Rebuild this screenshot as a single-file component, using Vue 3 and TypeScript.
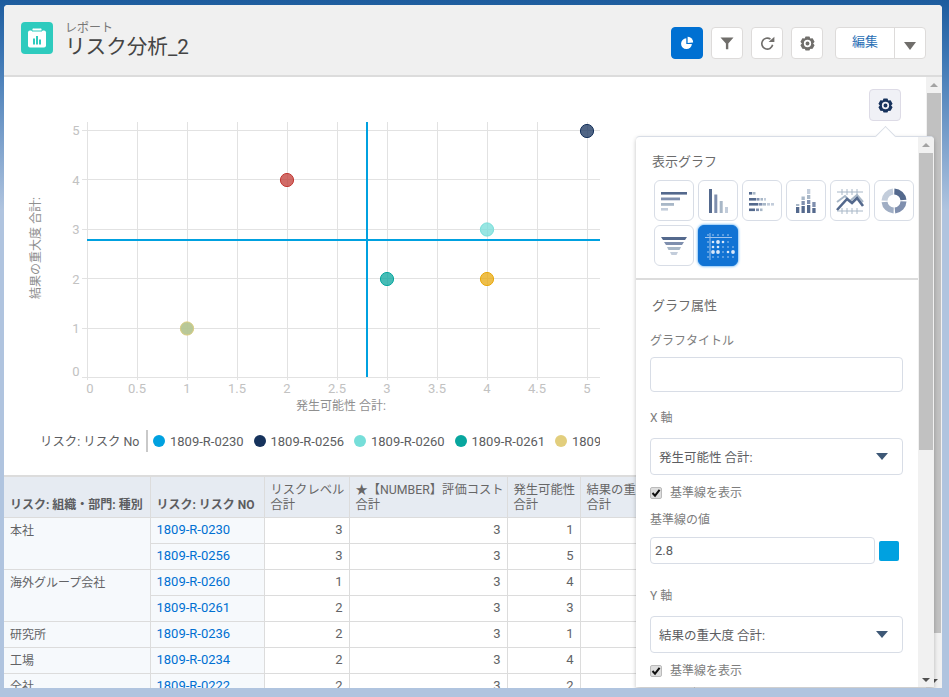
<script setup lang="ts">
type Bar = [number, number, number, number, string]

const c1 = '#54698d'
const c2 = '#7f8fae'
const c3 = '#a8b7c7'
const c4 = '#c3cddb'

function gear(cx: number, cy: number, r: number): string {
  let d = ''
  for (let i = 0; i < 6; i++) {
    const a = (Math.PI / 3) * i - Math.PI / 2
    const pts: [number, number][] = [
      [r * 0.76, a - 0.56],
      [r * 1.0, a - 0.27],
      [r * 1.0, a + 0.27],
      [r * 0.76, a + 0.56],
    ]
    for (const [rr, t] of pts) {
      d += `${d ? 'L' : 'M'}${(cx + rr * Math.cos(t)).toFixed(2)} ${(cy + rr * Math.sin(t)).toFixed(2)}`
    }
  }
  d += 'Z'
  const h = r * 0.5
  d += `M${cx - h} ${cy}a${h} ${h} 0 1 0 ${2 * h} 0a${h} ${h} 0 1 0 ${-2 * h} 0Z`
  const k = r * 0.27
  d += `M${cx - k} ${cy}a${k} ${k} 0 1 0 ${2 * k} 0a${k} ${k} 0 1 0 ${-2 * k} 0Z`
  return d
}

const gearPath = gear(8, 8, 7.8)

const icons: { id: string; bars: Bar[] }[] = [
  {
    id: 'hbar',
    bars: [
      [7, 11, 26, 2.6, c1],
      [7, 16.5, 19, 2.8, c2],
      [7, 22, 13, 2.8, c3],
      [7, 27, 7, 2.6, c4],
    ],
  },
  {
    id: 'vbar',
    bars: [
      [11, 8, 3, 24, c1],
      [16.3, 13.5, 3, 18.5, c2],
      [21.7, 20, 3, 12, c3],
      [27, 26, 3, 6, c4],
    ],
  },
  {
    id: 'ghbar',
    bars: [
      [7, 11, 3, 2.6, c1], [10.5, 11, 3, 2.6, c3],
      [7, 17, 7, 2.6, c1], [14.5, 17, 3, 2.6, c2], [18.5, 17, 2.5, 2.6, c3], [22, 17, 2, 2.6, c4],
      [7, 22, 9, 2.6, c1], [16.5, 22, 4, 2.6, c2], [21, 22, 3, 2.6, c3], [25, 22, 3, 2.6, c4], [29, 22, 3, 2.6, c4],
      [7, 27.5, 6, 2.6, c1], [14, 27.5, 3, 2.6, c2], [18, 27.5, 2.5, 2.6, c3],
    ],
  },
  {
    id: 'gvbar',
    bars: [
      [10, 26, 3.3, 6, c1], [10, 23, 3.3, 2, c3],
      [15.5, 25, 3.3, 7, c1], [15.5, 20, 3.3, 4, c2], [15.5, 15.5, 3.3, 3.5, c3],
      [21, 24, 3.3, 8, c1], [21, 19, 3.3, 4, c2], [21, 14, 3.3, 4, c3], [21, 8, 3.3, 5, c4],
      [26.3, 27, 3.3, 5, c1], [26.3, 21, 3.3, 5, c2],
    ],
  },
  { id: 'line', bars: [] },
  { id: 'donut', bars: [] },
  {
    id: 'funnel',
    bars: [],
  },
  { id: 'scatter', bars: [] },
]

const points = [
  { x: 587, y: 131, c: '#16325c' },
  { x: 287, y: 180, c: '#c23934' },
  { x: 487, y: 229.5, c: '#76ded9' },
  { x: 387, y: 279, c: '#08a69e' },
  { x: 487, y: 279, c: '#e8a80c' },
]

const gridX = [87.5, 137.5, 187.5, 237.5, 287.5, 337.5, 387.5, 437.5, 487.5, 537.5, 587.5]
const gridY = [130.5, 179.5, 229.5, 278.5, 328.5, 377.5]
const xLabels = [
  { t: '0', x: 90 }, { t: '0.5', x: 137 }, { t: '1', x: 187 }, { t: '1.5', x: 237 },
  { t: '2', x: 287 }, { t: '2.5', x: 337 }, { t: '3', x: 387 }, { t: '3.5', x: 437 },
  { t: '4', x: 487 }, { t: '4.5', x: 537 }, { t: '5', x: 587 },
]
const yLabels = [
  { t: '5', y: 130 }, { t: '4', y: 180 }, { t: '3', y: 229 },
  { t: '2', y: 279 }, { t: '1', y: 328 }, { t: '0', y: 371 },
]

const legend = [
  { c: '#00a1e0', t: '1809-R-0230' },
  { c: '#16325c', t: '1809-R-0256' },
  { c: '#76ded9', t: '1809-R-0260' },
  { c: '#08a69e', t: '1809-R-0261' },
  { c: '#e2ce7d', t: '1809-R-0262' },
]

const rows = [
  { group: '本社', span: 2, no: '1809-R-0230', v: [3, 3, 1] },
  { group: '', span: 0, no: '1809-R-0256', v: [3, 3, 5] },
  { group: '海外グループ会社', span: 2, no: '1809-R-0260', v: [1, 3, 4] },
  { group: '', span: 0, no: '1809-R-0261', v: [2, 3, 3] },
  { group: '研究所', span: 1, no: '1809-R-0236', v: [2, 3, 1] },
  { group: '工場', span: 1, no: '1809-R-0234', v: [2, 3, 4] },
  { group: '全社', span: 1, no: '1809-R-0222', v: [2, 3, 2] },
]

const dots: { x: number; y: number; r: number }[] = []
const sizes = [
  [1, 1, 1, 1, 1, 0],
  [1, 2, 3, 2, 1, 0],
  [1, 2, 2, 1, 1, 1],
  [1, 3, 3, 1, 2, 3],
  [1, 1, 1, 1, 1, 1],
]
sizes.forEach((row, j) => {
  row.forEach((s, i) => {
    if (s) dots.push({ x: 9 + i * 5, y: 11 + j * 5 + (j > 0 ? 0 : -2), r: s === 3 ? 1.9 : s === 2 ? 1.3 : 0.7 })
  })
})
</script>

<template>
  <div class="page">
    <div class="card">
      <header class="head">
        <div class="title-wrap">
          <span class="app-icon">
            <svg viewBox="0 0 32 32" width="32" height="32">
              <rect x="7" y="8.5" width="18" height="17" rx="2" fill="#fff" />
              <path d="M11 9V7.4A1.4 1.4 0 0 1 12.4 6h7.2A1.4 1.4 0 0 1 21 7.4V9z" fill="#fff" stroke="#2ecbbe" stroke-width="1" />
              <rect x="12" y="16.5" width="2" height="6" fill="#2ecbbe" />
              <rect x="15" y="14" width="2" height="8.5" fill="#2ecbbe" />
              <rect x="18" y="17.5" width="2" height="5" fill="#2ecbbe" />
            </svg>
          </span>
          <div class="titles">
            <div class="eyebrow">レポート</div>
            <h1 class="title">リスク分析_2</h1>
          </div>
        </div>
        <div class="actions">
          <button class="btn active" type="button">
            <svg viewBox="0 0 16 16" width="14" height="14">
              <path d="M7.2 2.6A6.2 6.2 0 1 0 13.6 9.2H7.2z" fill="#fff" />
              <path d="M8.7 0.9A6 6 0 0 1 15 7.5L8.7 8z" fill="#fff" />
            </svg>
          </button>
          <button class="btn" type="button">
            <svg viewBox="0 0 14 14" width="14" height="14"><path d="M0.5 1.5h13L8.3 7.4V13.2H5.9V7.4z" fill="#706e6b" /></svg>
          </button>
          <button class="btn" type="button">
            <svg viewBox="0 0 14 14" width="15" height="15">
              <path d="M11.8 8.2A5.1 5.1 0 1 1 9.8 3" fill="none" stroke="#706e6b" stroke-width="1.5" />
              <path d="M8 5.6h5.4V0.6z" fill="#706e6b" />
            </svg>
          </button>
          <button class="btn" type="button">
            <svg viewBox="0 0 16 16" width="15" height="15"><path :d="gearPath" fill="#706e6b" fill-rule="evenodd" /></svg>
          </button>
          <div class="split">
            <span class="split-main">編集</span>
            <span class="split-arrow"><i class="tri tri-gray"></i></span>
          </div>
        </div>
      </header>

      <div class="body">
        <div class="content">
          <section class="chart">
            <svg class="plot" viewBox="4 77 622 340" width="622" height="340">
              <g stroke="#e2e2e2" stroke-width="1">
                <line v-for="x in gridX" :key="'gx' + x" :x1="x" :x2="x" y1="122" y2="380" />
                <line v-for="y in gridY" :key="'gy' + y" x1="82" x2="600" :y1="y" :y2="y" />
              </g>
              <g class="ticks">
                <text v-for="l in xLabels" :key="'x' + l.t" :x="l.x" y="393" text-anchor="middle">{{ l.t }}</text>
                <text v-for="l in yLabels" :key="'y' + l.t" x="76" :y="l.y + 5" text-anchor="middle">{{ l.t }}</text>
              </g>
              <text class="axis-title" x="341" y="410" text-anchor="middle">発生可能性 合計:</text>
              <text class="axis-title" x="0" y="0" text-anchor="middle" transform="translate(40 248) rotate(-90)">結果の重大度 合計:</text>
              <line x1="367" x2="367" y1="122" y2="377" stroke="#00a1e0" stroke-width="2" />
              <line x1="87" x2="600" y1="240" y2="240" stroke="#00a1e0" stroke-width="2" />
              <g v-for="p in points" :key="p.x + '-' + p.y">
                <circle :cx="p.x" :cy="p.y" r="6.6" :fill="p.c" fill-opacity="0.75" :stroke="p.c" stroke-width="1" />
              </g>
              <circle cx="187" cy="328.5" r="6.6" fill="#00a1e0" fill-opacity="0.75" />
              <circle cx="187" cy="328.5" r="6.6" fill="#e2ce7d" fill-opacity="0.75" stroke="#e2ce7d" stroke-width="1" />
            </svg>
            <div class="legend">
              <span class="legend-title">リスク: リスク No</span>
              <span class="legend-sep"></span>
              <span v-for="l in legend" :key="l.t" class="legend-item">
                <i class="legend-dot" :style="{ background: l.c }"></i>{{ l.t }}
              </span>
            </div>
          </section>

          <table class="grid">
            <colgroup>
              <col class="w1" /><col class="w2" /><col class="w3" /><col class="w4" /><col class="w5" /><col class="w6" />
            </colgroup>
            <thead>
              <tr>
                <th class="strong">リスク: 組織・部門: 種別</th>
                <th class="strong">リスク: リスク NO</th>
                <th>リスクレベル<br />合計</th>
                <th>★【NUMBER】評価コスト<br />合計</th>
                <th>発生可能性<br />合計</th>
                <th>結果の重大度<br />合計</th>
              </tr>
            </thead>
            <tbody>
              <tr v-for="r in rows" :key="r.no">
                <td v-if="r.span" class="group" :rowspan="r.span">{{ r.group }}</td>
                <td class="no"><a class="link">{{ r.no }}</a></td>
                <td v-for="(n, i) in r.v" :key="i" class="num">{{ n }}</td>
                <td class="num"></td>
              </tr>
            </tbody>
          </table>
        </div>

        <div class="vscroll">
          <i class="sc-up"></i>
          <div class="sc-thumb outer-thumb"></div>
          <i class="sc-down"></i>
        </div>

        <button class="gear-btn" type="button">
          <svg viewBox="0 0 16 16" width="15" height="15"><path :d="gearPath" fill="#16325c" fill-rule="evenodd" /></svg>
        </button>

        <aside class="pop">
          <i class="pop-arrow"></i>
          <div class="pop-inner">
            <div class="pop-scroll">
              <div class="sec-types">
                <div class="sec-title">表示グラフ</div>
                <div class="types">
                  <button v-for="ic in icons" :key="ic.id" type="button" class="type" :class="{ on: ic.id === 'scatter' }">
                    <svg viewBox="0 0 40 40" width="40" height="40">
                      <rect v-for="(b, i) in ic.bars" :key="i" :x="b[0]" :y="b[1]" :width="b[2]" :height="b[3]" :fill="b[4]" />
                      <template v-if="ic.id === 'line'">
                        <g stroke="#a8b7c7" stroke-width="1" fill="none">
                          <path d="M7 11H33M7 30H33M12 8v6M17 8v6M22 8v6M27 8v6M12 27v6M17 27v6M22 27v6M27 27v6" />
                          <path d="M7 21L15 15L20 20L27 14L33 21" stroke-width="2" />
                        </g>
                        <path d="M7 29L17 18L22 22L27 17L33 25" stroke="#54698d" stroke-width="2.6" fill="none" />
                      </template>
                      <template v-if="ic.id === 'donut'">
                        <g fill="none" stroke-width="6">
                          <circle cx="20" cy="20" r="9.5" stroke="#54698d" stroke-dasharray="13.5 46.2" transform="rotate(-88 20 20)" />
                          <circle cx="20" cy="20" r="9.5" stroke="#7f8fae" stroke-dasharray="13.5 46.2" transform="rotate(2 20 20)" />
                          <circle cx="20" cy="20" r="9.5" stroke="#a0aec4" stroke-dasharray="13.5 46.2" transform="rotate(92 20 20)" />
                          <circle cx="20" cy="20" r="9.5" stroke="#c3cddb" stroke-dasharray="13.5 46.2" transform="rotate(182 20 20)" />
                        </g>
                      </template>
                      <template v-if="ic.id === 'funnel'">
                        <path d="M7 11H33L31 14H9z" fill="#54698d" />
                        <path d="M10 16H30L28 19H12z" fill="#7f8fae" />
                        <path d="M13 21H27L25.5 24H14.5z" fill="#a8b7c7" />
                        <path d="M16 26H24L22.5 29H17.5z" fill="#c3cddb" />
                      </template>
                      <template v-if="ic.id === 'scatter'">
                        <g stroke="#9fc4ee" stroke-width="1">
                          <line x1="7" x2="34" y1="11.5" y2="11.5" />
                          <line x1="12" x2="12" y1="7" y2="34" />
                        </g>
                        <circle v-for="(d, i) in dots" :key="i" :cx="d.x + 1" :cy="d.y" :r="d.r" fill="#dbe9fa" />
                      </template>
                    </svg>
                  </button>
                </div>
              </div>

              <div class="attrs">
                <div class="sec-title attr-head">グラフ属性</div>
                <label class="lbl">グラフタイトル</label>
                <div class="field tall"></div>

                <label class="lbl axis">X 軸</label>
                <div class="field select"><span>発生可能性 合計:</span><i class="tri tri-navy"></i></div>
                <div class="check"><i class="box"><svg viewBox="0 0 12 12" width="12" height="12"><path d="M2.5 6L5 8.7L9.6 2.8" fill="none" stroke="#111" stroke-width="2" /></svg></i>基準線を表示</div>
                <label class="lbl ref">基準線の値</label>
                <div class="ref-row">
                  <div class="field small">2.8</div>
                  <i class="swatch"></i>
                </div>

                <label class="lbl axis y">Y 軸</label>
                <div class="field select"><span>結果の重大度 合計:</span><i class="tri tri-navy"></i></div>
                <div class="check"><i class="box"><svg viewBox="0 0 12 12" width="12" height="12"><path d="M2.5 6L5 8.7L9.6 2.8" fill="none" stroke="#111" stroke-width="2" /></svg></i>基準線を表示</div>
              </div>
            </div>
            <div class="vscroll inner">
              <i class="sc-up"></i>
              <div class="sc-thumb inner-thumb"></div>
              <i class="sc-down"></i>
            </div>
          </div>
        </aside>
      </div>
    </div>
  </div>
</template>

<style scoped>
.page {
  box-sizing: border-box;
  width: 949px;
  height: 697px;
  padding: 5px 7px 9px 4px;
  overflow: hidden;
  background: linear-gradient(180deg, #1d5c9e 0, #3f78b5 60px, #b0c4df 210px, #b0c4df 100%);
  font-family: Roboto, "Noto Sans CJK JP", "Liberation Sans", sans-serif;
  color: #54555a;
}
.card {
  height: 683px;
  background: #fff;
  border-radius: 4px 4px 0 0;
  display: flex;
  flex-direction: column;
  overflow: hidden;
}
.head {
  box-sizing: border-box;
  height: 72px;
  flex: none;
  background: #f0f0f0;
  border-bottom: 2px solid #dcdcdc;
  display: flex;
  justify-content: space-between;
  align-items: flex-start;
  padding: 17px 16px 0 17px;
}
.title-wrap { display: flex; gap: 12px; }
.app-icon {
  width: 32px;
  height: 32px;
  border-radius: 4px;
  background: #2ecbbe;
  display: block;
}
.titles { margin-top: -1px; }
.eyebrow { font-size: 12px; line-height: 13px; color: #777; margin-top: 1px; }
.title { margin: 0; font-size: 20.6px; line-height: 24px; font-weight: 400; color: #444; }
.actions { display: flex; align-items: center; gap: 8px; padding-top: 5px; }
.btn {
  box-sizing: border-box;
  width: 32px;
  height: 32px;
  padding: 0;
  background: #fff;
  border: 1px solid #dddbda;
  border-radius: 4px;
  display: flex;
  align-items: center;
  justify-content: center;
}
.btn.active { background: #0070d2; border-color: #0070d2; }
.split {
  box-sizing: border-box;
  margin-left: 4px;
  width: 91px;
  height: 32px;
  display: flex;
  background: #fff;
  border: 1px solid #dddbda;
  border-radius: 4px;
}
.split-main {
  width: 58px;
  border-right: 1px solid #dddbda;
  text-align: center;
  font-size: 13px;
  line-height: 28px;
  color: #2a6fb5;
}
.split-arrow { flex: 1; display: flex; align-items: center; justify-content: center; padding-top: 5px; }
.tri { display: block; width: 0; height: 0; border-style: solid; border-color: transparent; border-bottom-width: 0; }
.tri-gray { border-width: 8px 6px 0; border-top-color: #706e6b; }
.tri-navy { border-width: 7px 6px 0; border-top-color: #3e5876; }

.body { flex: 1; min-height: 0; position: relative; display: flex; overflow: hidden; }
.content { flex: 1; min-width: 0; overflow: hidden; }
.chart { box-sizing: border-box; height: 400px; border-bottom: 2px solid #dcdcdc; }
.plot { display: block; }
.ticks text { font-size: 13px; fill: #c2c2c2; }
.axis-title { font-size: 12px; fill: #8f8f8f; }
.legend {
  box-sizing: border-box;
  width: 596px;
  margin-top: 13px;
  padding-left: 36px;
  display: flex;
  align-items: center;
  height: 22px;
  overflow: hidden;
  white-space: nowrap;
  font-size: 13px;
  color: #5c5d61;
}
.legend-title { flex: none; width: 98px; font-size: 12.4px; }
.legend-sep { flex: none; width: 2px; height: 22px; background: #c9c9c9; margin: 0 5px 0 8px; }
.legend-item { flex: none; display: inline-flex; align-items: center; width: 100.5px; }
.legend-dot { width: 12px; height: 12px; border-radius: 50%; margin-right: 5px; flex: none; }

.grid { table-layout: fixed; width: 690px; border-collapse: collapse; font-size: 13px; color: #626366; }
.w1 { width: 146px; } .w2 { width: 114px; } .w3 { width: 85px; } .w4 { width: 158px; } .w5 { width: 73px; } .w6 { width: 114px; }
.grid th {
  height: 40px;
  padding: 0 6px 4px;
  box-sizing: border-box;
  background: #e6ebf2;
  border: 1px solid #dcdcdc;
  border-top: 0;
  border-left: 0;
  text-align: left;
  vertical-align: bottom;
  font-weight: 400;
  font-size: 12.3px;
  line-height: 15px;
  white-space: nowrap;
  overflow: hidden;
  color: #666;
}
.grid th.strong { font-weight: 700; font-size: 12px; color: #5c5d61; }
.grid td {
  height: 26px;
  padding: 0 6px;
  box-sizing: border-box;
  border: 1px solid #dcdcdc;
  border-top: 0;
  border-left: 0;
  line-height: 16px;
  white-space: nowrap;
}
.grid td.group { background: #f6f9fc; vertical-align: top; padding-top: 5px; font-size: 12px; }
.grid td.no { background: #f6f9fc; }
.grid td.num { text-align: right; }
.link { color: #0070d2; }

.vscroll { flex: none; width: 16px; background: #f1f1f1; display: flex; flex-direction: column; align-items: center; position: relative; }
.sc-up { margin-top: 6px; width: 0; height: 0; border: 4px solid transparent; border-top: 0; border-bottom: 4px solid #a3a3a3; }
.sc-down { position: absolute; bottom: 5px; width: 0; height: 0; border: 4px solid transparent; border-bottom: 0; border-top: 4px solid #505050; }
.sc-thumb { background: #c1c1c1; width: 14px; margin-top: 6px; }
.outer-thumb { height: 540px; }
.inner-thumb { height: 297px; }

.gear-btn {
  position: absolute;
  top: 12px;
  left: 865px;
  box-sizing: border-box;
  width: 32px;
  height: 32px;
  padding: 0;
  background: #f0f1f6;
  border: 1px solid #dddbe6;
  border-radius: 4px;
  display: flex;
  align-items: center;
  justify-content: center;
}
.pop {
  position: absolute;
  top: 59px;
  left: 632px;
  width: 298px;
  height: 551px;
  z-index: 2;
  box-sizing: border-box;
  background: #fff;
  border-top: 1px solid #d8dde6;
  border-radius: 4px 4px 0 0;
  box-shadow: 0 2px 4px rgba(0, 0, 0, 0.25);
}
.pop-arrow {
  position: absolute;
  top: -8px;
  left: 242px;
  width: 14px;
  height: 14px;
  background: #fff;
  border-top: 1px solid #d8dde6;
  border-left: 1px solid #d8dde6;
  transform: rotate(45deg);
}
.pop-inner { position: relative; height: 100%; display: flex; overflow: hidden; border-radius: 4px 4px 0 0; }
.pop-scroll { flex: 1; min-width: 0; overflow: hidden; }
.vscroll.inner { width: 16px; }
.sec-types { box-sizing: border-box; height: 143px; border-bottom: 2px solid #dcdcdc; padding: 16px 0 0 16px; }
.sec-title { font-size: 13px; line-height: 18px; color: #6b6b6b; }
.types { display: flex; flex-wrap: wrap; gap: 4px; margin-top: 9px; margin-left: 2px; width: 270px; }
.type {
  box-sizing: border-box;
  width: 40px;
  height: 41px;
  padding: 0;
  background: #fff;
  border: 1px solid #d8dde6;
  border-radius: 6px;
  overflow: hidden;
  display: flex;
  align-items: center;
  justify-content: center;
}
.type svg { flex: none; }
.type.on { background: #1173d4; border-color: #1173d4; box-shadow: 0 0 3px #1589ee; }
.attrs { padding: 17px 15px 0 14px; }
.attr-head { padding-left: 2px; }
.lbl { display: block; font-size: 12px; line-height: 16px; color: #7d7d7d; margin-top: 18px; }
.field {
  box-sizing: border-box;
  background: #fff;
  border: 1px solid #d8dde6;
  border-radius: 4px;
  font-size: 12.5px;
  color: #5c5d61;
}
.field.tall { height: 35px; margin-top: 8px; }
.lbl.axis { margin-top: 18px; }
.lbl.axis.y { margin-top: 24px; }
.field.select {
  height: 37px;
  margin-top: 12px;
  display: flex;
  align-items: center;
  justify-content: space-between;
  padding: 0 14px 0 8px;
}
.check { display: flex; align-items: center; font-size: 12px; line-height: 16px; color: #7d7d7d; margin-top: 10px; }
.box {
  box-sizing: border-box;
  width: 12px;
  height: 12px;
  margin-right: 8px;
  background: #dedede;
  border: 1px solid #bbb;
  border-radius: 2px;
  display: block;
  overflow: hidden;
}
.box svg { display: block; margin: -1px; }
.lbl.ref { margin-top: 11px; }
.ref-row { display: flex; align-items: center; gap: 4px; margin-top: 9px; }
.field.small { width: 225px; height: 27px; line-height: 25px; padding-left: 4px; font-size: 13px; }
.swatch { width: 20px; height: 20px; background: #00a1e0; border-radius: 2px; display: block; }
</style>

<style>
body { margin: 0; }
</style>
